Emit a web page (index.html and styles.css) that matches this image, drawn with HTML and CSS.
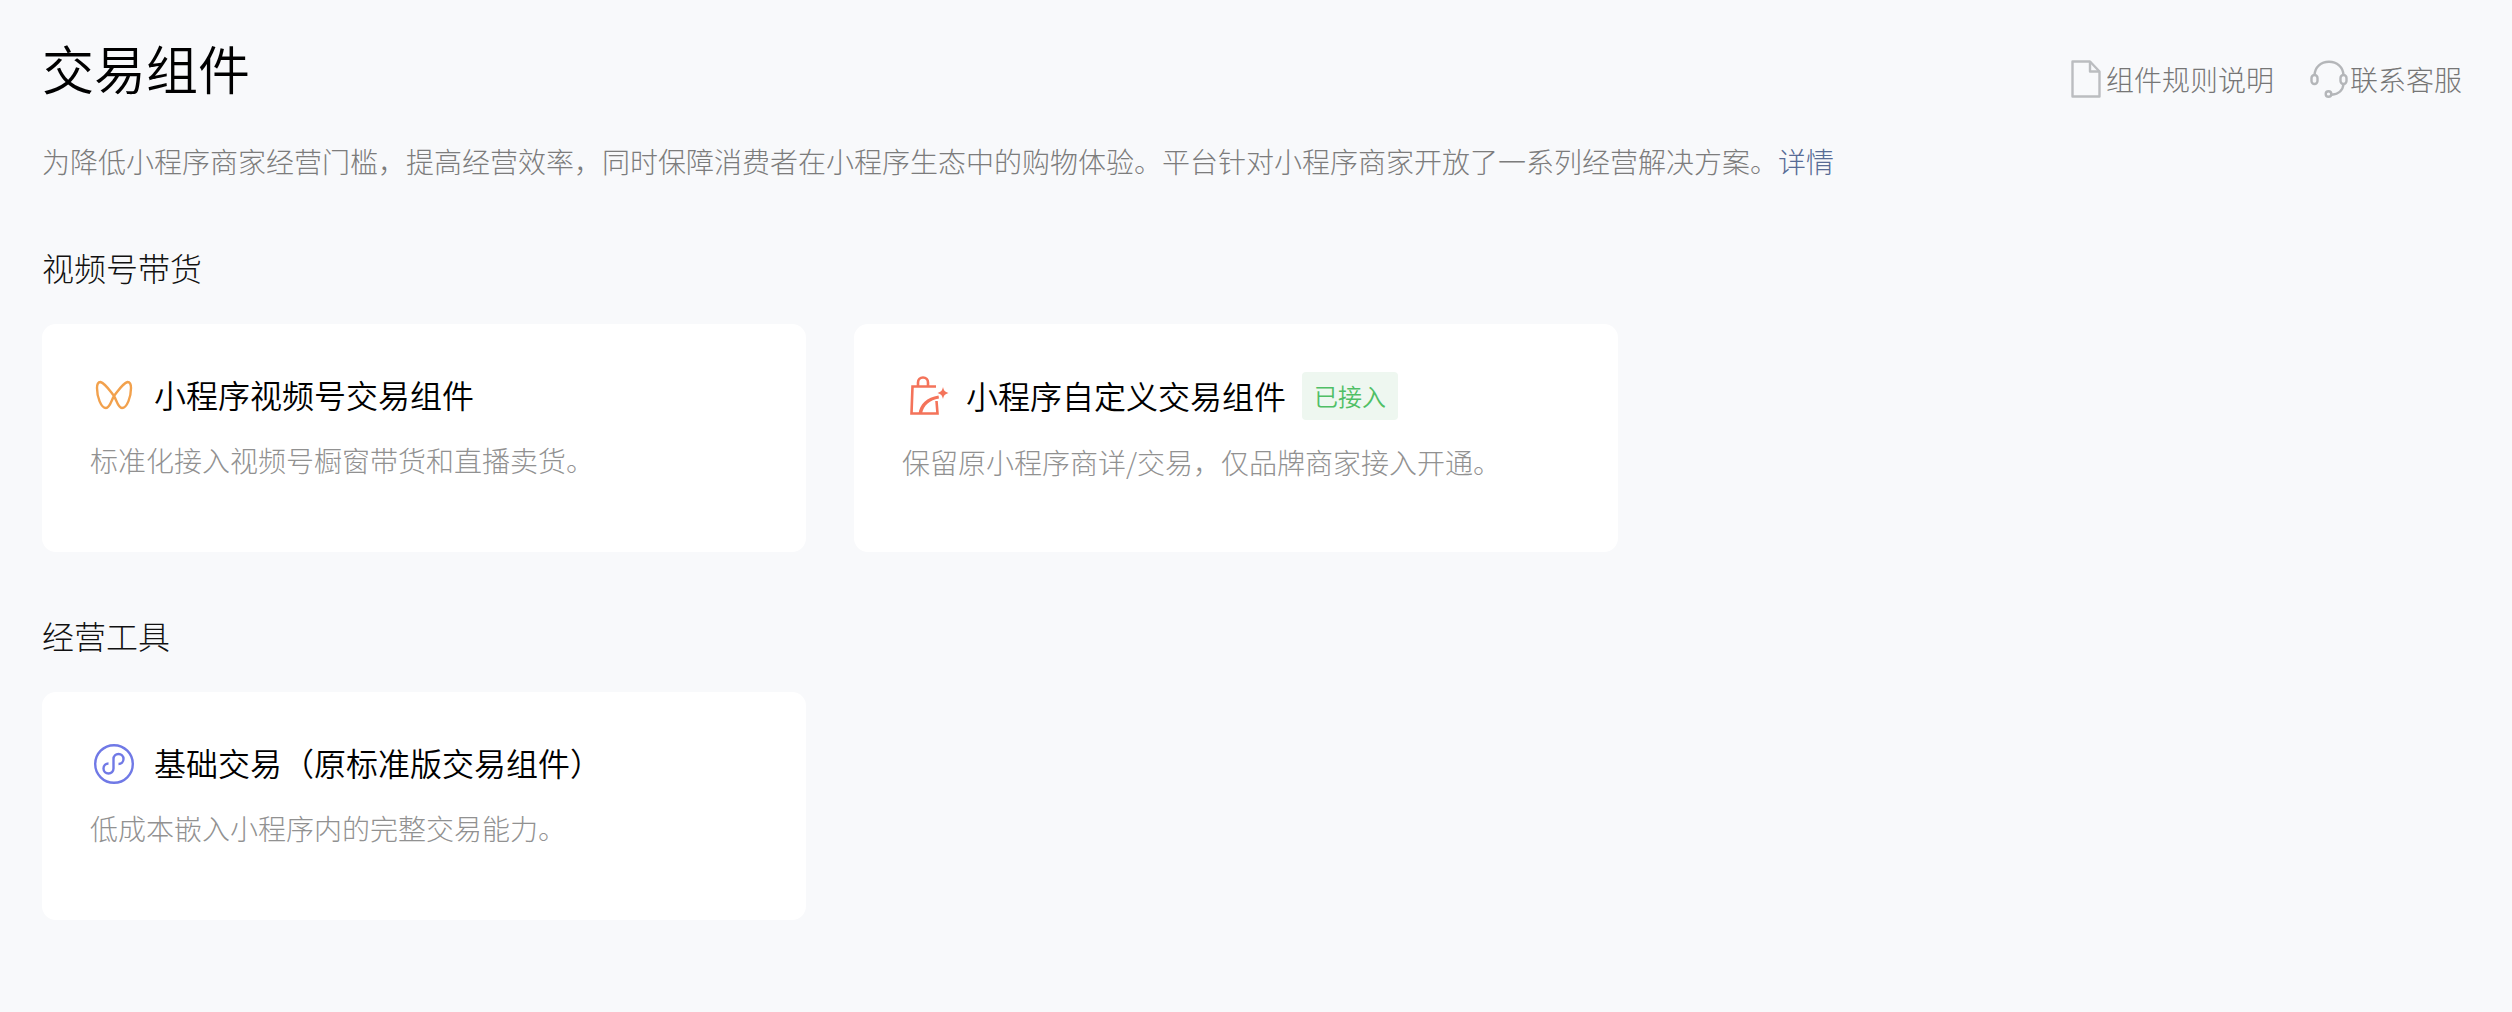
FILE: index.html
```html
<!DOCTYPE html>
<html lang="zh-CN">
<head>
    <meta charset="UTF-8">
    <title>交易组件</title>
    <link rel="stylesheet" href="styles.css">
</head>
<body>
    <div class="container">
        <div class="page-head">
            <h1>交易组件</h1>
            <div class="head-links">
                <a class="head-link doc-link">
                    <svg class="head-icon" width="30" height="38" viewBox="0 0 30 38" fill="none" stroke="#bbbdc0" stroke-width="2.400" stroke-linejoin="round">
                        <path d="M1.500 1.500H19L28.500 11.500V36.500H1.500z"/>
                        <path d="M19 1.500V11.500H28.500"/>
                    </svg>
                    <span>组件规则说明</span>
                </a>
                <a class="head-link">
                    <svg class="head-icon" width="38" height="38" viewBox="0 0 38 38" fill="none" stroke="#b4b6b9" stroke-width="2.400">
                        <path d="M4.500 15C5 7 11 1.800 19 1.800S33 7 33.500 15"/>
                        <rect x="1.500" y="15" width="6" height="9" rx="3"/>
                        <rect x="30.500" y="15" width="6" height="9" rx="3"/>
                        <path d="M33.500 24c-.5 6-5 10-12 10.800"/>
                        <circle cx="18.500" cy="34" r="2.800"/>
                    </svg>
                    <span>联系客服</span>
                </a>
            </div>
        </div>
        <p class="intro">为降低小程序商家经营门槛，提高经营效率，同时保障消费者在小程序生态中的购物体验。平台针对小程序商家开放了一系列经营解决方案。<a class="more">详情</a></p>

        <h2>视频号带货</h2>
        <div class="card-list">
            <div class="card">
                <div class="card-title">
                    <svg class="card-icon" width="48" height="48" viewBox="0 -1 48 48" fill="none" stroke="#f2a14d" stroke-width="2.400">
                        <path d="M10.500 11C15 12 20 20 24 25C26.500 29 28 37 32 37C37 37 41 26 41 17C41 13 40 11 37.500 11C33 12 28 20 24 25C21.500 29 20 37 16 37C11 37 7 26 7 17C7 13 8 11 10.500 11Z"/>
                    </svg>
                    <span>小程序视频号交易组件</span>
                </div>
                <p class="card-desc">标准化接入视频号橱窗带货和直播卖货。</p>
            </div>
            <div class="card">
                <div class="card-title">
                    <svg class="card-icon" width="48" height="48" viewBox="0 -1 48 48" fill="none" stroke="#f4735a" stroke-width="2.600">
                        <path d="M34 14.500H10.500L9.500 41.500H35.500L34.500 29"/>
                        <path d="M16 14.500V10.500C16 7.500 18 5.500 21 5.500S26 7.500 26 10.500V14.500"/>
                        <path class="spark" d="M16.500 42C17.500 32 25 25.500 36.500 23.500L37 26.500C28 28 21.500 33 20 42z"/>
                        <path class="spark" d="M41 15c.8 3.700 1.900 4.800 5.500 6-3.600 1.200-4.700 2.300-5.500 6-.8-3.700-1.900-4.800-5.500-6 3.600-1.200 4.700-2.300 5.500-6z"/>
                    </svg>
                    <span>小程序自定义交易组件</span>
                    <span class="tag">已接入</span>
                </div>
                <p class="card-desc">保留原小程序商详/交易，仅品牌商家接入开通。</p>
            </div>
        </div>

        <h2>经营工具</h2>
        <div class="card-list">
            <div class="card">
                <div class="card-title">
                    <svg class="card-icon" width="48" height="48" viewBox="0 -1 48 48" fill="none" stroke="#7079e6" stroke-width="2.400">
                        <circle cx="24" cy="25" r="18.800"/>
                        <path d="M18.500 24.500a5 5 0 1 0 5 5V20a5 5 0 1 1 5 5"/>
                    </svg>
                    <span>基础交易（原标准版交易组件）</span>
                </div>
                <p class="card-desc">低成本嵌入小程序内的完整交易能力。</p>
            </div>
        </div>
    </div>
</body>
</html>
```

FILE: styles.css
```css
body {
    margin: 0;
    background: #f8f9fb;
    font-family: "Noto Sans CJK SC", "Noto Sans", sans-serif;
    font-weight: 300;
    color: #000;
}

.container {
    padding: 31px 50px 92px 42px;
}

.page-head {
    display: flex;
    justify-content: space-between;
    align-items: flex-start;
}

h1 {
    margin: 0;
    font-size: 52px;
    font-weight: 350;
    line-height: 74px;
}

.head-links {
    display: flex;
    gap: 36px;
    margin-top: 28px;
}

.head-link {
    display: flex;
    align-items: center;
    gap: 2px;
    font-size: 28px;
    line-height: 40px;
    color: #767676;
}

.doc-link {
    gap: 5px;
}

.intro {
    margin: 36px 0 0;
    font-size: 28px;
    line-height: 40px;
    color: #7c7c7c;
}

.more {
    color: #576b95;
}

h2 {
    margin: 64px 0 0;
    font-size: 32px;
    font-weight: 300;
    line-height: 44px;
    color: #111;
}

.card-list + h2 {
    margin-top: 61px;
}

.card-list {
    display: flex;
    gap: 48px;
    margin-top: 35px;
}

.card {
    box-sizing: border-box;
    width: 764px;
    height: 228px;
    padding: 46px 48px;
    background: #fff;
    border-radius: 14px;
}

.card-title {
    display: flex;
    align-items: center;
    font-size: 32px;
    font-weight: 350;
    line-height: 48px;
}

.card-icon {
    flex: none;
    margin-right: 16px;
}

.spark {
    fill: #f4735a;
    stroke: none;
}

.tag {
    margin: 2px 0 0 16px;
    padding: 4px 12px;
    font-size: 24px;
    line-height: 40px;
    color: #4fbf65;
    background: #eef7f0;
    border-radius: 4px;
}

.card-desc {
    margin: 22px 0 0;
    font-size: 28px;
    line-height: 40px;
    color: #919191;
}
```
